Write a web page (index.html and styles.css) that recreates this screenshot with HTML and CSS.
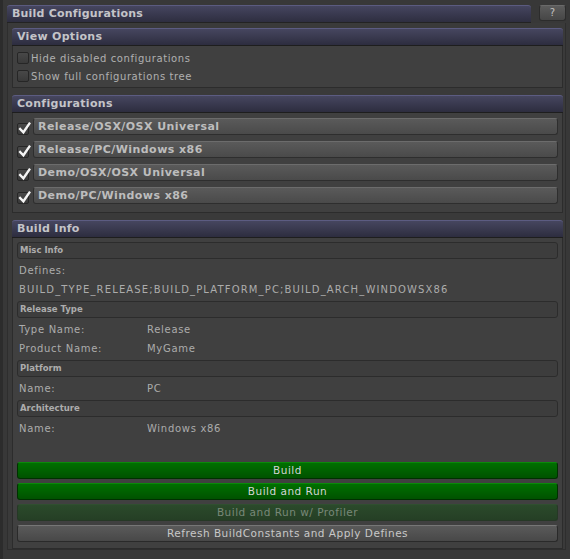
FILE: index.html
```html
<!DOCTYPE html>
<html>
<head>
<meta charset="utf-8">
<link rel="stylesheet" href="styles.css">
</head>
<body>
<div class="window">
  <div class="titlebar">
    <div class="title">Build Configurations</div>
    <div class="help">?</div>
  </div>
  <div class="frame">
    <div class="section">
      <div class="sec-head">View Options</div>
      <div class="sec-body opts">
        <label class="opt"><span class="cb"></span>Hide disabled configurations</label>
        <label class="opt"><span class="cb"></span>Show full configurations tree</label>
      </div>
    </div>
    <div class="section">
      <div class="sec-head">Configurations</div>
      <div class="sec-body configs">
        <div class="cfg"><span class="cb on"><svg viewBox="0 0 12 12"><path d="M2 6.5 L5 9.5 L10.5 1.5" /></svg></span><div class="cfg-btn">Release/OSX/OSX Universal</div></div>
        <div class="cfg"><span class="cb on"><svg viewBox="0 0 12 12"><path d="M2 6.5 L5 9.5 L10.5 1.5" /></svg></span><div class="cfg-btn">Release/PC/Windows x86</div></div>
        <div class="cfg"><span class="cb on"><svg viewBox="0 0 12 12"><path d="M2 6.5 L5 9.5 L10.5 1.5" /></svg></span><div class="cfg-btn">Demo/OSX/OSX Universal</div></div>
        <div class="cfg"><span class="cb on"><svg viewBox="0 0 12 12"><path d="M2 6.5 L5 9.5 L10.5 1.5" /></svg></span><div class="cfg-btn">Demo/PC/Windows x86</div></div>
      </div>
    </div>
    <div class="section info">
      <div class="sec-head">Build Info</div>
      <div class="sec-body infobody">
        <div class="sub">Misc Info</div>
        <div class="line">Defines:</div>
        <div class="line caps">BUILD_TYPE_RELEASE;BUILD_PLATFORM_PC;BUILD_ARCH_WINDOWSX86</div>
        <div class="sub">Release Type</div>
        <div class="kv"><span class="k">Type Name:</span><span>Release</span></div>
        <div class="kv"><span class="k">Product Name:</span><span>MyGame</span></div>
        <div class="sub">Platform</div>
        <div class="kv"><span class="k">Name:</span><span>PC</span></div>
        <div class="sub">Architecture</div>
        <div class="kv"><span class="k">Name:</span><span>Windows x86</span></div>
        <div class="actions">
          <div class="btn green">Build</div>
          <div class="btn green">Build and Run</div>
          <div class="btn green disabled">Build and Run w/ Profiler</div>
          <div class="btn gray">Refresh BuildConstants and Apply Defines</div>
        </div>
      </div>
    </div>
  </div>
</div>
</body>
</html>
```
FILE: styles.css
```css
html, body {
  margin: 0;
  padding: 0;
}
body {
  background: #383838;
  width: 570px;
  height: 559px;
  overflow: hidden;
  font-family: "DejaVu Sans", sans-serif;
  font-size: 10px;
  color: #b4b4b4;
}
.window {
  border-left: 3px solid #2c2c2c;
  height: 559px;
  box-sizing: border-box;
  padding: 5px 4px 0 4px;
}
.titlebar {
  display: flex;
  height: 17px;
}
.title {
  flex: 1;
  background: linear-gradient(#45455f, #2e2e40);
  border-top: 1px solid #5b5b80;
  border-radius: 3px 3px 0 0;
  box-sizing: border-box;
  padding-left: 5px;
  font-weight: bold;
  font-size: 11px;
  line-height: 15px;
  color: #c4c4c8;
  letter-spacing: 0.2px;
  box-shadow: 0 1px 0 #232323;
}
.help {
  width: 27px;
  margin-left: 8px;
  height: 16px;
  background: linear-gradient(#5c5c5c, #464646);
  border: 1px solid #2c2c2c;
  border-top-color: #6a6a6a;
  border-radius: 3px;
  box-sizing: border-box;
  text-align: center;
  font-size: 10px;
  line-height: 14px;
  color: #c0c0c0;
}
.frame {
  margin-top: 1px;
  border: 1px solid #2e2e2e;
  border-top: none;
  height: 527px;
  box-sizing: border-box;
  padding: 5px 2px 0 4px;
  display: flex;
  flex-direction: column;
  gap: 7px;
  background: #3a3a3a;
}
.section {
  display: flex;
  flex-direction: column;
}
.sec-head {
  height: 17px;
  background: linear-gradient(#46465f, #2d2d3f);
  border-top: 1px solid #5c5c82;
  border-radius: 3px 3px 0 0;
  box-sizing: border-box;
  padding-left: 5px;
  font-weight: bold;
  font-size: 11px;
  line-height: 15px;
  color: #c4c4c8;
  letter-spacing: 0.3px;
  box-shadow: 0 1px 0 #1e1e1e;
}
.sec-body {
  margin-top: 1px;
  background: #404040;
  border: 1px solid #2c2c2c;
  border-top: none;
  box-sizing: border-box;
}
.opts {
  height: 42px;
  padding: 6px 0 0 4px;
  display: flex;
  flex-direction: column;
  gap: 6px;
}
.opt {
  display: flex;
  align-items: center;
  height: 12px;
  letter-spacing: 0.6px;
  color: #b0b0b0;
}
.cb {
  width: 12px;
  height: 12px;
  box-sizing: border-box;
  border: 1px solid #262626;
  border-radius: 2px;
  background: linear-gradient(#484848, #3a3a3a);
  margin-right: 2px;
  position: relative;
  flex: none;
}
.cb svg {
  position: absolute;
  left: 0;
  top: -2px;
  width: 13px;
  height: 13px;
}
.cb svg path {
  fill: none;
  stroke: #f4f4f4;
  stroke-width: 2.2;
  stroke-linecap: square;
}
.configs {
  height: 100px;
  padding: 5px 4px 0 4px;
  display: flex;
  flex-direction: column;
  gap: 6px;
}
.cfg {
  display: flex;
  align-items: center;
  height: 17px;
}
.cfg .cb {
  margin-top: 4px;
  margin-right: 4px;
}
.cfg-btn {
  flex: 1;
  height: 17px;
  box-sizing: border-box;
  background: linear-gradient(#5a5a5a, #4a4a4a);
  border: 1px solid #2e2e2e;
  border-top-color: #6c6c6c;
  border-radius: 3px;
  padding-left: 4px;
  font-weight: bold;
  font-size: 11px;
  line-height: 15px;
  letter-spacing: 0.45px;
  color: #bdbdbd;
}
.info {
  flex: 1;
}
.infobody {
  flex: 1;
  padding: 4px 4px 6px 4px;
  display: flex;
  flex-direction: column;
}
.sub {
  height: 17px;
  box-sizing: border-box;
  border: 1px solid #2c2c2c;
  border-radius: 3px;
  background: #3d3d3d;
  padding-left: 2px;
  font-family: "DejaVu Sans", sans-serif;
  font-weight: bold;
  font-size: 8.5px;
  line-height: 15px;
  color: #acacac;
  margin-bottom: 2px;
}
.line, .kv {
  height: 19px;
  line-height: 20px;
  padding-left: 2px;
  letter-spacing: 0.7px;
  color: #acacac;
  white-space: nowrap;
}
.line.caps {
  letter-spacing: 1.15px;
}
.line + .sub, .kv + .sub { margin-top: 2px; }
.kv {
  display: flex;
}
.k {
  width: 128px;
}
.actions {
  margin-top: auto;
  display: flex;
  flex-direction: column;
  gap: 4px;
}
.btn {
  height: 17px;
  box-sizing: border-box;
  border-radius: 3px;
  text-align: center;
  font-size: 10.5px;
  line-height: 15px;
  letter-spacing: 0.5px;
}
.green {
  background: linear-gradient(#007000, #005200);
  border: 1px solid #003000;
  border-top-color: #0a8a0a;
  color: #d4d4d4;
}
.green.disabled {
  background: linear-gradient(#2b4a2b, #253f25);
  border-color: #263826;
  border-top-color: #304f30;
  color: #788878;
}
.gray {
  background: linear-gradient(#5a5a5a, #484848);
  border: 1px solid #2a2a2a;
  border-top-color: #767676;
  color: #c8c8c8;
}
```
